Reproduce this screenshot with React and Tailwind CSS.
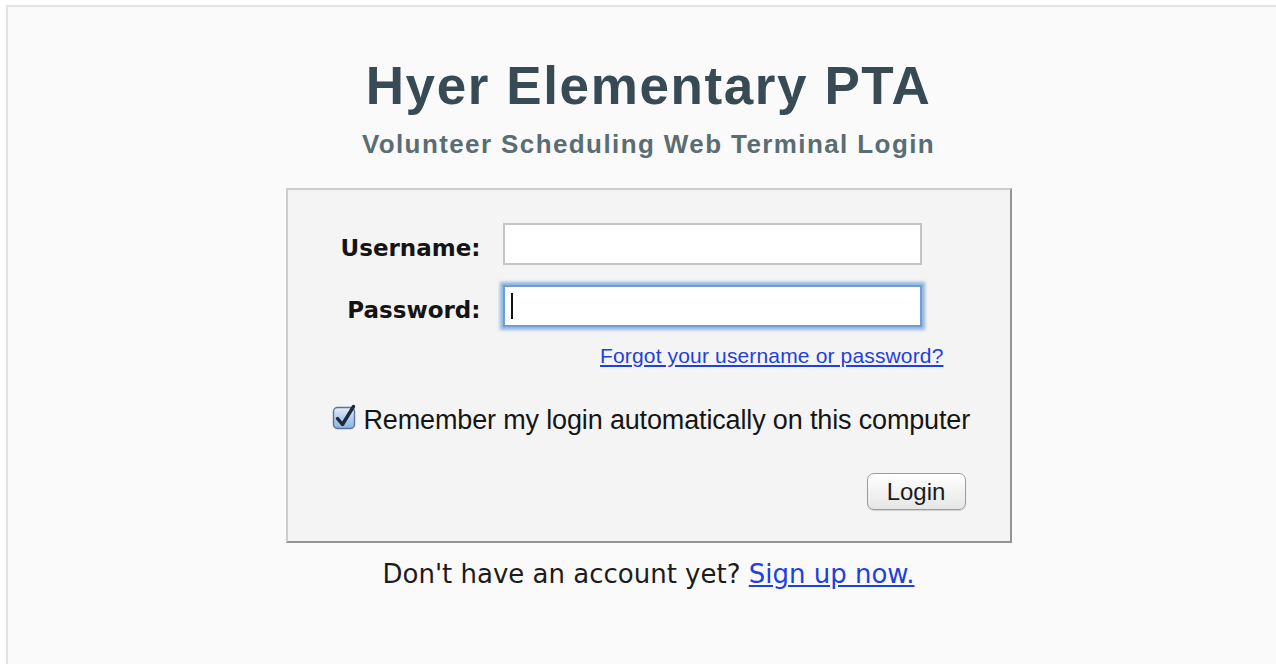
import { useState } from 'react'

function CheckMark({ checked }) {
  return (
    <svg width="26" height="27" viewBox="0 0 26 27" className="block">
      <defs>
        <linearGradient id="cbFill" x1="0" y1="0" x2="0" y2="1">
          <stop offset="0" stopColor="#e6eefa" />
          <stop offset="0.5" stopColor="#b3cdef" />
          <stop offset="1" stopColor="#8db3e4" />
        </linearGradient>
      </defs>
      <rect x="1.5" y="3.5" width="21" height="21" rx="4" fill="url(#cbFill)" stroke="#5d7594" strokeWidth="1.4" />
      {checked && (
        <path
          d="M5.5 14.5 L10.5 20.5 L21.5 2.5"
          fill="none"
          stroke="#1e2a3a"
          strokeWidth="3.4"
          strokeLinecap="round"
          strokeLinejoin="round"
        />
      )}
    </svg>
  )
}

export default function App() {
  const [username, setUsername] = useState('')
  const [password, setPassword] = useState('')
  const [remember, setRemember] = useState(true)

  return (
    <div className="w-[1276px] h-[664px] overflow-hidden bg-white">
      <div className="ml-[6px] mt-[5px] w-[1285px] h-[700px] border-2 border-[#e3e3e3] bg-[#fafafa] pt-[51px] flex flex-col items-center">
        {/* Heading */}
        <h1 className="font-['Liberation_Sans',Arial,sans-serif] font-bold text-[53px] leading-[56px] tracking-[1.6px] text-[#384a54]">
          Hyer Elementary PTA
        </h1>
        <h2 className="mt-[16px] font-['Liberation_Sans',Arial,sans-serif] font-bold text-[26px] leading-[28px] tracking-[1.4px] text-[#5a6d73]">
          Volunteer Scheduling Web Terminal Login
        </h2>

        {/* Login box */}
        <form
          className="mt-[30px] w-[726px] border-2 border-[#cdcdcd] border-r-[#959595] border-b-[#959595] bg-[#f4f4f4] pt-[33px] pb-[31px] flex flex-col"
          onSubmit={(e) => e.preventDefault()}
        >
          <div className="flex items-center">
            <label className="w-[193px] pt-[7px] text-right font-['DejaVu_Sans',Verdana,sans-serif] font-bold text-[23px] leading-[28px] text-[#141414]">
              Username:
            </label>
            <input
              type="text"
              value={username}
              onChange={(e) => setUsername(e.target.value)}
              className="ml-[22px] w-[419px] h-[42px] border-2 border-[#c4c4c4] bg-white px-2 text-[20px] outline-none"
            />
          </div>

          <div className="mt-[20px] flex items-center">
            <label className="w-[193px] pt-[7px] text-right font-['DejaVu_Sans',Verdana,sans-serif] font-bold text-[23px] leading-[28px] text-[#141414]">
              Password:
            </label>
            <div className="ml-[22px] w-[419px] h-[42px] border-2 border-[#6f9dd6] bg-white shadow-[0_0_3px_3px_rgba(112,160,218,0.75)] flex items-center pl-[6px]">
              <span className="w-[2px] h-[26px] bg-[#111]" />
              <input
                type="password"
                value={password}
                onChange={(e) => setPassword(e.target.value)}
                className="flex-1 h-full bg-transparent outline-none text-[20px]"
              />
            </div>
          </div>

          <div className="mt-[17px] flex justify-end pr-[66px]">
            <a
              href="#"
              className="font-['Liberation_Sans',Arial,sans-serif] text-[21px] leading-[24px] tracking-[0.15px] text-[#1f3fe0] underline underline-offset-2"
            >
              Forgot your username or password?
            </a>
          </div>

          <label
            className="mt-[38px] pl-[44px] flex items-start gap-[6px] cursor-pointer"
            onClick={() => setRemember(!remember)}
          >
            <span className="-mt-[2px]">
              <CheckMark checked={remember} />
            </span>
            <span className="font-['Liberation_Sans',Arial,sans-serif] text-[27px] leading-[28px] tracking-[-0.15px] text-[#151515]">
              Remember my login automatically on this computer
            </span>
          </label>

          <div className="mt-[39px] flex justify-end pr-[44px]">
            <button
              type="submit"
              className="w-[99px] h-[37px] rounded-[7px] border border-[#9c9c9c] bg-gradient-to-b from-white to-[#e6e6e6] shadow-[0_1px_1px_rgba(0,0,0,0.15)] font-['Liberation_Sans',Arial,sans-serif] text-[24px] leading-none text-[#1a1a1a]"
            >
              Login
            </button>
          </div>
        </form>

        <p className="mt-[16px] font-['DejaVu_Sans',Verdana,sans-serif] text-[26px] leading-[30px] text-[#1c1c1c]">
          Don't have an account yet?{' '}
          <a href="#" className="text-[#1f3fe0] underline underline-offset-2">
            Sign up now.
          </a>
        </p>
      </div>
    </div>
  )
}
